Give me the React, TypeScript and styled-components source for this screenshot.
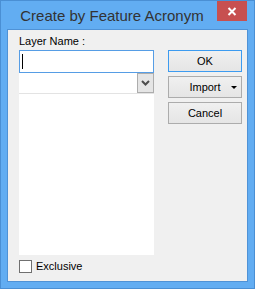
import { FC } from "react";
import styled, { createGlobalStyle } from "styled-components";

const GlobalStyle = createGlobalStyle`
  html, body {
    margin: 0;
    padding: 0;
    background: #ffffff;
  }
  body {
    font-family: "Liberation Sans", Arial, sans-serif;
    font-size: 11px;
  }
`;

const Window = styled.div`
  box-sizing: border-box;
  width: 255px;
  height: 289px;
  display: flex;
  flex-direction: column;
  background: #62adf2;
  border: 1px solid #4a8fd4;
`;

const TitleBar = styled.div`
  display: flex;
  align-items: flex-start;
  height: 28px;
  padding-left: 6px;
`;

const Title = styled.div`
  flex: 1;
  text-align: center;
  font-family: "Liberation Sans", Arial, sans-serif;
  font-size: 15px;
  line-height: 20px;
  padding-top: 5px;
  color: #333333;
`;

const CloseButton = styled.div`
  width: 30px;
  height: 20px;
  margin-right: 7px;
  background: #c75050;
  display: flex;
  align-items: center;
  justify-content: center;
`;

const Client = styled.div`
  flex: 1;
  margin: 0 6px 6px 6px;
  border: 1px solid #4f92d6;
  background: #f0f0f0;
  display: grid;
  grid-template-columns: 135px 74px;
  column-gap: 14px;
  padding: 0 5px 0 11px;
`;

const LeftColumn = styled.div`
  display: flex;
  flex-direction: column;
  padding: 5px 0 8px 0;
`;

const RightColumn = styled.div`
  display: flex;
  flex-direction: column;
  gap: 4px;
  padding-top: 20px;
`;

const Label = styled.div`
  line-height: 13px;
  height: 13px;
  margin-bottom: 2px;
  color: #000;
`;

const TextBox = styled.div`
  box-sizing: border-box;
  height: 23px;
  background: #fff;
  border: 1px solid #569de5;
  padding: 3px 2px;
`;

const Caret = styled.div`
  width: 1px;
  height: 15px;
  background: #000;
`;

const Combo = styled.div`
  box-sizing: border-box;
  height: 21px;
  background: #fff;
  border-bottom: 1px solid #e3e3e3;
  display: flex;
  justify-content: flex-end;
`;

const ComboArrow = styled.div`
  box-sizing: border-box;
  width: 17px;
  height: 20px;
  border: 1px solid #adadad;
  background: #e5e5e5;
  display: flex;
  align-items: center;
  justify-content: center;
`;

const ListBox = styled.div`
  flex: 1;
  background: #fff;
`;

const CheckRow = styled.label`
  display: flex;
  align-items: center;
  gap: 4px;
  margin-top: 5px;
  height: 13px;
  line-height: 13px;
`;

const CheckBox = styled.span`
  box-sizing: border-box;
  width: 13px;
  height: 13px;
  border: 1px solid #707070;
  background: #fff;
`;

const Button = styled.div<{ $default?: boolean }>`
  box-sizing: border-box;
  height: 22px;
  border: 1px solid ${(p) => (p.$default ? "#3c9bf0" : "#acacac")};
  background: linear-gradient(#f0f0f0, #e5e5e5);
  display: flex;
  align-items: center;
  justify-content: center;
  position: relative;
  color: #000;
`;

const DropMark = styled.span`
  position: absolute;
  right: 4px;
  top: 9px;
  width: 0;
  height: 0;
  border-left: 3px solid transparent;
  border-right: 3px solid transparent;
  border-top: 3px solid #000;
`;

const App: FC = () => {
  return (
    <>
      <GlobalStyle />
      <Window>
        <TitleBar>
          <Title>Create by Feature Acronym</Title>
          <CloseButton>
            <svg width="10" height="9" viewBox="0 0 10 9">
              <path d="M1.5 1 L8.5 8 M8.5 1 L1.5 8" stroke="#fff" strokeWidth="2" />
            </svg>
          </CloseButton>
        </TitleBar>
        <Client>
          <LeftColumn>
            <Label>Layer Name :</Label>
            <TextBox>
              <Caret />
            </TextBox>
            <Combo>
              <ComboArrow>
                <svg width="9" height="6" viewBox="0 0 9 6">
                  <path d="M1 1 L4.5 4.5 L8 1" stroke="#4d4d4d" strokeWidth="2" fill="none" />
                </svg>
              </ComboArrow>
            </Combo>
            <ListBox />
            <CheckRow>
              <CheckBox />
              Exclusive
            </CheckRow>
          </LeftColumn>
          <RightColumn>
            <Button $default>OK</Button>
            <Button>
              Import
              <DropMark />
            </Button>
            <Button>Cancel</Button>
          </RightColumn>
        </Client>
      </Window>
    </>
  );
};

export default App;
